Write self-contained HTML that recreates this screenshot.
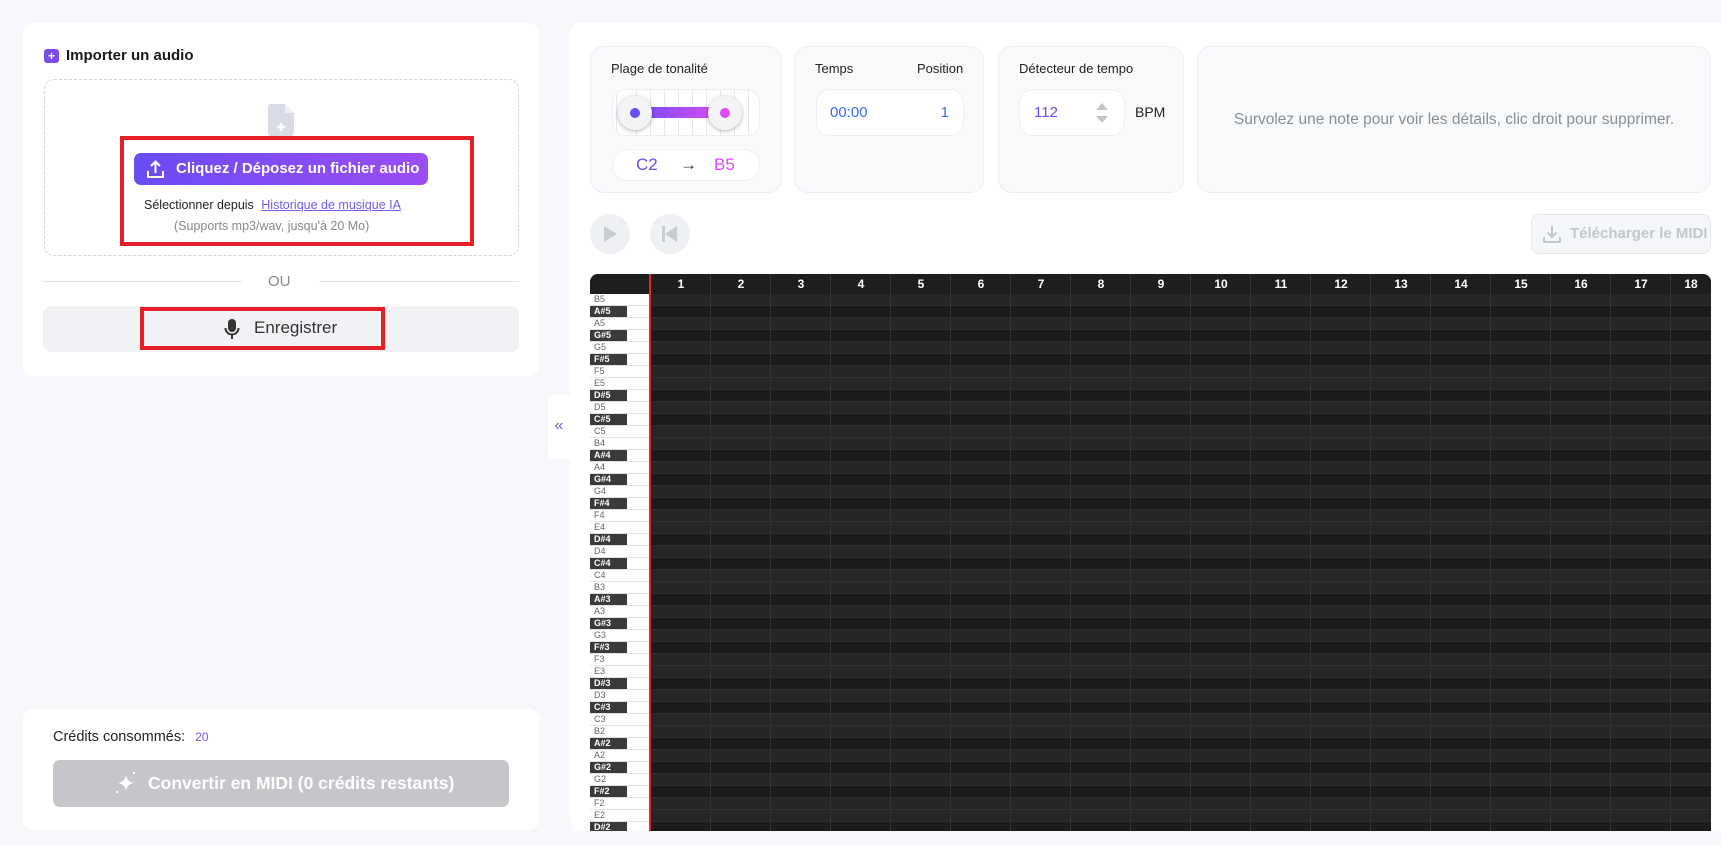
<!DOCTYPE html>
<html><head><meta charset="utf-8"><style>
*{box-sizing:border-box;margin:0;padding:0}
body{width:1721px;height:845px;background:#f6f7fb;font-family:"Liberation Sans",sans-serif;position:relative;overflow:hidden;color:#222}
.abs{position:absolute}
.card{position:absolute;background:#fff;border-radius:10px}
.ic{position:absolute;background:#f8f9fb;border:1px solid #eceef3;border-radius:14px}
.lab{font-size:13px;color:#222}
.row{height:12px;position:relative}
.keys .row{background:#fff;border-bottom:1px solid #e2e2e2;font-size:9px;color:#666;padding-left:4px;line-height:11px}
.keys .row.b span{position:absolute;left:0;top:0;width:37px;height:11px;background:#3a3a3a;color:#fff;padding-left:4px;font-weight:bold}
.grid .row{background:#262626;border-bottom:1px solid #303030}
.grid .row.b{background:#1b1b1b}
.hd div{flex:0 0 60px;text-align:center}
</style></head><body>

<div class="card" style="left:23px;top:23px;width:516px;height:353px"></div>
<div class="abs" style="left:44px;top:49px;width:15px;height:14px;background:#7c4cf0;border-radius:3px;color:#fff;font-size:12px;line-height:14px;text-align:center;font-weight:bold">+</div>
<div class="abs" style="left:66px;top:47px;font-size:15px;font-weight:bold;color:#1a1a1a">Importer un audio</div>
<div class="abs" style="left:44px;top:79px;width:475px;height:177px;border:1px dashed #cfd2d8;border-radius:10px"></div>
<svg class="abs" style="left:268px;top:104px" width="26" height="32" viewBox="0 0 26 32"><path d="M3 0h14l9 9v20a3 3 0 0 1-3 3H3a3 3 0 0 1-3-3V3a3 3 0 0 1 3-3z" fill="#d9dce3"/><path d="M17 0v9h9" fill="#eef0f4"/><path d="M13 19v8M9 23h8" stroke="#fff" stroke-width="2.5"/></svg>
<div class="abs" style="left:120px;top:136px;width:354px;height:110px;border:4px solid #e41f2a"></div>
<div class="abs" style="left:134px;top:153px;width:294px;height:32px;border-radius:7px;background:linear-gradient(90deg,#6a4cf5,#9b4cf5);color:#fff;font-size:15px;font-weight:bold;line-height:32px;padding-left:42px">Cliquez / Déposez un fichier audio</div>
<svg class="abs" style="left:146px;top:160px" width="19" height="19" viewBox="0 0 19 19" fill="none" stroke="#fff" stroke-width="2"><path d="M9.5 13V2M5 6l4.5-4.5L14 6M2 11v6h15v-6"/></svg>
<div class="abs" style="left:144px;top:198px;font-size:12.5px;color:#222">Sélectionner depuis <span style="color:#6d5cf0;text-decoration:underline;margin-left:4px">Historique de musique IA</span></div>
<div class="abs" style="left:174px;top:219px;font-size:12.5px;color:#888">(Supports mp3/wav, jusqu'à 20 Mo)</div>
<div class="abs" style="left:43px;top:281px;width:199px;height:1px;background:#e2e4e8"></div>
<div class="abs" style="left:319px;top:281px;width:200px;height:1px;background:#e2e4e8"></div>
<div class="abs" style="left:268px;top:273px;font-size:15px;color:#888">OU</div>
<div class="abs" style="left:43px;top:306px;width:476px;height:46px;background:#f1f2f6;border-radius:8px"></div>
<div class="abs" style="left:140px;top:307px;width:245px;height:43px;border:4px solid #e41f2a"></div>
<svg class="abs" style="left:224px;top:318px" width="16" height="22" viewBox="0 0 16 22"><rect x="4" y="1" width="8" height="13" rx="4" fill="#333"/><path d="M1.5 10a6.5 6.5 0 0 0 13 0M8 16.5V21" stroke="#333" stroke-width="2" fill="none"/></svg>
<div class="abs" style="left:254px;top:318px;font-size:17px;color:#333">Enregistrer</div>

<div class="card" style="left:23px;top:709px;width:516px;height:121px"></div>
<div class="abs" style="left:53px;top:729px;font-size:14.5px;color:#222">Crédits consommés: <span style="color:#6d5cf0;font-size:12px;margin-left:6px">20</span></div>
<div class="abs" style="left:53px;top:760px;width:456px;height:47px;background:#c5c6c9;border-radius:7px;color:#fff;font-size:17.5px;font-weight:bold;line-height:47px;padding-left:95px">Convertir en MIDI (0 crédits restants)</div>
<svg class="abs" style="left:114px;top:770px" width="24" height="26" viewBox="0 0 24 26"><path d="M12 5c1 5 3 7 8 8-5 1-7 3-8 8-1-5-3-7-8-8 5-1 7-3 8-8z" fill="#fff"/><circle cx="20" cy="3" r="1.2" fill="#fff"/><circle cx="3" cy="22" r="1.2" fill="#fff"/></svg>

<div class="abs" style="left:548px;top:395px;width:22px;height:64px;background:#fff;border-radius:6px 0 0 6px;color:#6d5cf0;font-size:16px;line-height:62px;text-align:center">«</div>

<div class="card" style="left:570px;top:23px;width:1151px;height:808px;border-radius:10px 0 0 10px"></div>

<div class="ic" style="left:590px;top:46px;width:192px;height:147px"></div>
<div class="abs lab" style="left:611px;top:61px">Plage de tonalité</div>
<div class="abs" style="left:612px;top:89px;width:148px;height:47px;background:#fff;border:1px solid #eceef3;border-radius:14px;overflow:hidden;background-image:repeating-linear-gradient(90deg,transparent 0 13px,#e8e8ec 13px 14px);background-position:10px 0"></div>
<div class="abs" style="left:645px;top:107px;width:72px;height:11px;background:linear-gradient(90deg,#7a4cf6,#d94cf6)"></div>
<div class="abs" style="left:618px;top:96px;width:34px;height:34px;border-radius:50%;background:#f4f4f6;box-shadow:0 1px 4px rgba(0,0,0,.3)"></div>
<div class="abs" style="left:630px;top:108px;width:10px;height:10px;border-radius:50%;background:#6a4cf5"></div>
<div class="abs" style="left:708px;top:96px;width:34px;height:34px;border-radius:50%;background:#f4f4f6;box-shadow:0 1px 4px rgba(0,0,0,.3)"></div>
<div class="abs" style="left:720px;top:108px;width:10px;height:10px;border-radius:50%;background:#d94cf6"></div>
<div class="abs" style="left:612px;top:149px;width:148px;height:32px;background:#fff;border:1px solid #eceef3;border-radius:16px;font-size:17px;line-height:30px"><span style="position:absolute;left:23px;color:#6a4cf5">C2</span><span style="position:absolute;left:67px;color:#333">→</span><span style="position:absolute;left:101px;color:#d94cf6">B5</span></div>

<div class="ic" style="left:794px;top:46px;width:190px;height:147px"></div>
<div class="abs lab" style="left:815px;top:61px">Temps</div>
<div class="abs lab" style="left:917px;top:61px">Position</div>
<div class="abs" style="left:816px;top:89px;width:148px;height:47px;background:#fff;border:1px solid #eceef3;border-radius:14px;font-size:15px;color:#3a6cf0;line-height:45px"><span style="position:absolute;left:13px">00:00</span><span style="position:absolute;right:14px">1</span></div>

<div class="ic" style="left:998px;top:46px;width:186px;height:147px"></div>
<div class="abs lab" style="left:1019px;top:61px">Détecteur de tempo</div>
<div class="abs" style="left:1019px;top:89px;width:106px;height:47px;background:#fff;border:1px solid #eceef3;border-radius:14px;font-size:15px;color:#6a4cf5;line-height:45px;padding-left:14px">112</div>
<div class="abs" style="left:1096px;top:103px;width:0;height:0;border:6px solid transparent;border-bottom:7px solid #c4c6cc;border-top:0"></div>
<div class="abs" style="left:1096px;top:116px;width:0;height:0;border:6px solid transparent;border-top:7px solid #c4c6cc;border-bottom:0"></div>
<div class="abs" style="left:1135px;top:104px;font-size:14px;color:#222">BPM</div>

<div class="ic" style="left:1197px;top:46px;width:514px;height:147px"></div>
<div class="abs" style="left:1197px;top:111px;width:514px;text-align:center;font-size:15.5px;color:#8a8d94">Survolez une note pour voir les détails, clic droit pour supprimer.</div>

<div class="abs" style="left:590px;top:214px;width:40px;height:40px;border-radius:50%;background:#eef0f3"></div>
<div class="abs" style="left:604px;top:226px;width:0;height:0;border-top:8px solid transparent;border-bottom:8px solid transparent;border-left:13px solid #c9ccd2"></div>
<div class="abs" style="left:650px;top:214px;width:40px;height:40px;border-radius:50%;background:#eef0f3"></div>
<div class="abs" style="left:662px;top:226px;width:3px;height:16px;background:#c9ccd2"></div>
<div class="abs" style="left:665px;top:226px;width:0;height:0;border-top:8px solid transparent;border-bottom:8px solid transparent;border-right:12px solid #c9ccd2"></div>

<div class="abs" style="left:1531px;top:214px;width:180px;height:40px;border:1px solid #e6e8ee;background:#f5f6f9;border-radius:8px;font-size:15px;font-weight:bold;color:#c3c6cc;line-height:38px;padding-left:38px">Télécharger le MIDI</div>
<svg class="abs" style="left:1542px;top:224px" width="20" height="20" viewBox="0 0 20 20" fill="none" stroke="#c3c6cc" stroke-width="2"><path d="M10 2v11M5.5 8.5 10 13l4.5-4.5M2 13v5h16v-5"/></svg>

<div class="abs" style="left:590px;top:274px;width:1121px;height:557px;background:#1b1b1b;border-radius:8px 8px 0 0;overflow:hidden">
 <div class="abs" style="left:0;top:0;width:1121px;height:20px;background:#1e1e1e"></div>
 <div class="abs hd" style="left:61px;top:0;width:1060px;height:20px;display:flex;color:#fff;font-size:12px;font-weight:bold;line-height:20px;background-image:repeating-linear-gradient(90deg,transparent 0 59px,#343434 59px 60px)">
   <div>1</div><div>2</div><div>3</div><div>4</div><div>5</div><div>6</div><div>7</div><div>8</div><div>9</div><div>10</div><div>11</div><div>12</div><div>13</div><div>14</div><div>15</div><div>16</div><div>17</div><div style="flex:0 0 40px">18</div>
 </div>
 <div class="keys abs" style="left:0;top:20px;width:59px">
  <div class="row">B5</div><div class="row b"><span>A#5</span></div><div class="row">A5</div><div class="row b"><span>G#5</span></div><div class="row">G5</div><div class="row b"><span>F#5</span></div><div class="row">F5</div><div class="row">E5</div><div class="row b"><span>D#5</span></div><div class="row">D5</div><div class="row b"><span>C#5</span></div><div class="row">C5</div>
  <div class="row">B4</div><div class="row b"><span>A#4</span></div><div class="row">A4</div><div class="row b"><span>G#4</span></div><div class="row">G4</div><div class="row b"><span>F#4</span></div><div class="row">F4</div><div class="row">E4</div><div class="row b"><span>D#4</span></div><div class="row">D4</div><div class="row b"><span>C#4</span></div><div class="row">C4</div>
  <div class="row">B3</div><div class="row b"><span>A#3</span></div><div class="row">A3</div><div class="row b"><span>G#3</span></div><div class="row">G3</div><div class="row b"><span>F#3</span></div><div class="row">F3</div><div class="row">E3</div><div class="row b"><span>D#3</span></div><div class="row">D3</div><div class="row b"><span>C#3</span></div><div class="row">C3</div>
  <div class="row">B2</div><div class="row b"><span>A#2</span></div><div class="row">A2</div><div class="row b"><span>G#2</span></div><div class="row">G2</div><div class="row b"><span>F#2</span></div><div class="row">F2</div><div class="row">E2</div><div class="row b"><span>D#2</span></div>
 </div>
 <div class="abs" style="left:59px;top:0;width:2px;height:557px;background:#e0262c"></div>
 <div class="grid abs" style="left:61px;top:20px;width:1060px">
  <div class="row"></div><div class="row b"></div><div class="row"></div><div class="row b"></div><div class="row"></div><div class="row b"></div><div class="row"></div><div class="row"></div><div class="row b"></div><div class="row"></div><div class="row b"></div><div class="row"></div>
  <div class="row"></div><div class="row b"></div><div class="row"></div><div class="row b"></div><div class="row"></div><div class="row b"></div><div class="row"></div><div class="row"></div><div class="row b"></div><div class="row"></div><div class="row b"></div><div class="row"></div>
  <div class="row"></div><div class="row b"></div><div class="row"></div><div class="row b"></div><div class="row"></div><div class="row b"></div><div class="row"></div><div class="row"></div><div class="row b"></div><div class="row"></div><div class="row b"></div><div class="row"></div>
  <div class="row"></div><div class="row b"></div><div class="row"></div><div class="row b"></div><div class="row"></div><div class="row b"></div><div class="row"></div><div class="row"></div><div class="row b"></div>
 </div>
 <div class="abs" style="left:61px;top:20px;width:1060px;height:540px;background-image:repeating-linear-gradient(90deg,transparent 0 59px,#333 59px 60px)"></div>
</div>
</body></html>
